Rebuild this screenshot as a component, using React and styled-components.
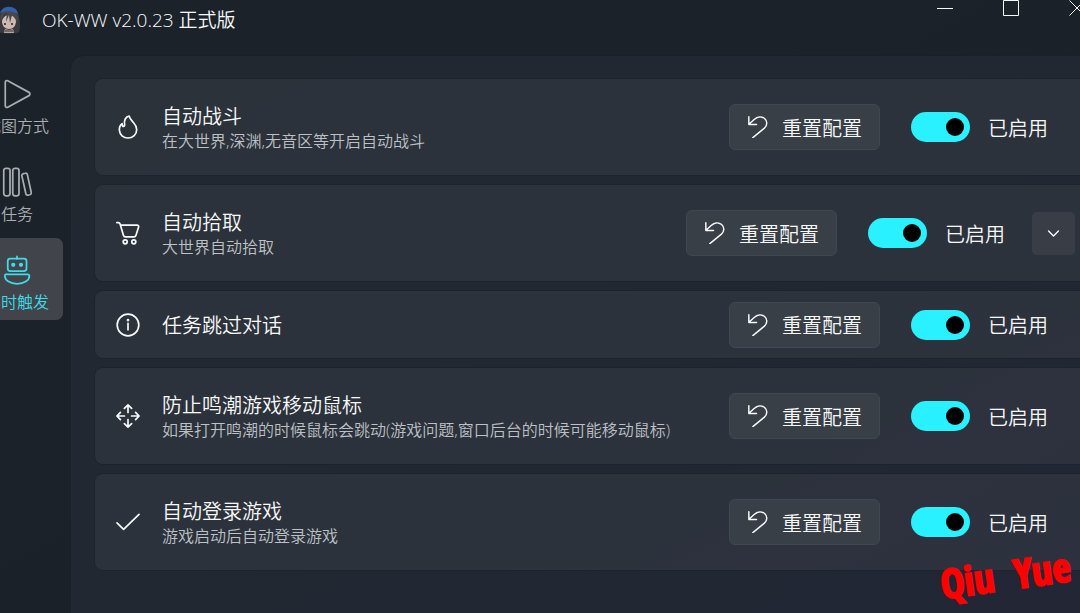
import React, { useState } from 'react'
import styled, { createGlobalStyle } from 'styled-components'

const GlobalStyle = createGlobalStyle`
  * {
    box-sizing: border-box;
  }

  html, body, #root {
    height: 100%;
  }

  body {
    margin: 0;
    overflow: hidden;
    background: #1b2129;
    color: #f8f9fa;
    font-family: "Open Sans", "Noto Sans CJK SC", sans-serif;
    font-weight: 350;
  }

  button {
    margin: 0;
    padding: 0;
    border: none;
    background: none;
    color: inherit;
    font: inherit;
  }
`

const Window = styled.div`
  display: flex;
  flex-direction: column;
  min-height: 100%;
  overflow: hidden;
  background-image: linear-gradient(150deg, #1b2229 0%, #1b2229 40%, #1b1f2b 100%);
`

const TitleBar = styled.header`
  display: flex;
  align-items: flex-start;
  height: 55px;
`

const Avatar = styled.svg`
  width: 26px;
  height: 28px;
  margin: 6px 20px 0 -4px;
`

const AppTitle = styled.h1`
  flex: 1;
  margin: 0;
  padding-top: 6px;
  font-size: 19px;
  line-height: 28px;
  font-weight: 350;
`

const WindowButtons = styled.div`
  display: flex;
  margin-right: -30px;
`

const WindowButton = styled.button`
  display: flex;
  justify-content: center;
  width: 66px;
  height: 32px;
`

const Body = styled.div`
  display: flex;
  flex: 1;
`

const Nav = styled.nav`
  display: flex;
  flex-direction: column;
  flex: none;
  gap: 6px;
  width: 92px;
  margin: 0 7px 0 -29px;
  padding-top: 7px;
`

const NavItem = styled.button`
  display: flex;
  flex-direction: column;
  align-items: center;
  gap: 6px;
  padding: 17px 0 7px;
  border-radius: 7px;
  background: ${({ $active }) => ($active ? '#41454b' : 'transparent')};
  color: ${({ $active }) => ($active ? '#3fdbe6' : '#a9adb1')};
  font-size: 16px;
  line-height: 22px;
`

const Panel = styled.main`
  flex: 1;
  min-width: 0;
  padding: 23px 0 24px 24px;
  border: 1px solid #1a2027;
  border-width: 1px 0 0 1px;
  border-radius: 14px 0 0 0;
  background-image: linear-gradient(150deg, #212830 0%, #212831 45%, #222635 100%);
`

const List = styled.ul`
  display: flex;
  flex-direction: column;
  gap: 10px;
  margin: 0;
  padding: 0;
  list-style: none;
`

const Card = styled.li`
  display: flex;
  align-items: center;
  min-height: ${({ $compact }) => ($compact ? '67px' : '96px')};
  padding: 0 ${({ $expandable }) => ($expandable ? '5px' : '32px')} 0 21px;
  border-radius: 8px 0 0 8px;
  background: rgba(255, 255, 255, 0.05);
  box-shadow: 0 0 0 1px rgba(0, 0, 0, 0.1);
`

const CardText = styled.div`
  flex: 1;
  min-width: 0;
  margin-left: 22px;
  padding-top: 2px;
  white-space: nowrap;
`

const CardTitle = styled.h2`
  margin: 0;
  font-size: 20px;
  line-height: 26px;
  font-weight: 350;
`

const CardNote = styled.p`
  margin: 0;
  color: #bdc0c4;
  font-size: 16px;
  line-height: 22px;
`

const ResetButton = styled.button`
  display: flex;
  align-items: center;
  gap: 13px;
  height: 46px;
  padding: 0 17px;
  border: 1px solid #42474f;
  border-radius: 6px;
  background: #393f47;
`

const ControlText = styled.span`
  padding-top: 3px;
  font-size: 20px;
  line-height: 26px;
`

const SwitchLabel = styled.label`
  display: flex;
  align-items: center;
  gap: 18px;
  margin-left: 31px;
`

const Switch = styled.input`
  display: flex;
  align-items: center;
  justify-content: ${({ checked }) => (checked ? 'flex-end' : 'flex-start')};
  appearance: none;
  width: 59px;
  height: 30px;
  margin: 0;
  padding: 0 6px;
  border-radius: 15px;
  background: ${({ checked }) => (checked ? '#29f1ff' : '#575c63')};

  &::before {
    content: "";
    width: 18px;
    height: 18px;
    border-radius: 50%;
    background: #000;
  }
`

const ExpandButton = styled.button`
  display: flex;
  align-items: center;
  justify-content: center;
  width: 43px;
  height: 43px;
  margin-left: 27px;
  border-radius: 5px;
  background: #393e46;
`

// Floats over the bottom corner of the window
const Signature = styled.div`
  position: absolute;
  right: 9px;
  bottom: 14px;
  display: flex;
  gap: 20px;
  color: #fe0000;
  font-family: "Liberation Sans Narrow", "Open Sans Condensed", "Roboto Condensed", "Liberation Sans", sans-serif;
  font-size: 40px;
  font-weight: 700;
  line-height: 48px;
  -webkit-text-stroke: 2px #fe0000;
  transform: rotate(-8deg);
`

const Icon = ({ size = 24, width = 1.4, children }) => (
  <svg width={size} height={size} viewBox="0 0 24 24" fill="none" stroke="currentColor" strokeWidth={width} strokeLinecap="round" strokeLinejoin="round" aria-hidden="true">
    {children}
  </svg>
)

const icons = {
  play: <path d="M2.6 2.6c0-1.1 1-1.7 2-1.2l17 9.3c1 .6 1 2 0 2.6l-17 9.3c-1 .5-2-.1-2-1.2z" />,
  library: (
    <>
      <rect x="1.4" y="1" width="5" height="22" rx="1.8" />
      <rect x="8.6" y="1" width="5" height="22" rx="1.8" />
      <path d="M17.2 5.3l1.4-.3c.8-.2 1.5.3 1.7 1.1l3.1 14.3c.2.8-.3 1.6-1.1 1.8l-1.4.3c-.8.2-1.6-.3-1.8-1.1L15.9 7.1c-.2-.8.4-1.6 1.3-1.8z" />
    </>
  ),
  robot: (
    <>
      <path d="M12 1v2" />
      <rect x="4.6" y="2.8" width="15" height="10" rx="2" />
      <circle cx="9" cy="7.8" r="1" fill="currentColor" />
      <circle cx="15.2" cy="7.8" r="1" fill="currentColor" />
      <path d="M3.8 15.4h16.6c1 0 1.5.6 1.5 1.4 0 3.6-4.4 6.2-9.8 6.2s-9.8-2.6-9.8-6.2c0-.8.5-1.4 1.5-1.4z" />
    </>
  ),
  fire: <path d="M13.2 1.2c-3.6.6-5.4 4.2-4.6 8.2.2 1.2-.3 2-1.1 2-.9 0-1.3-1-1.4-2.8-2.2 1.8-3 4.1-2.7 6.8.4 4.3 3.8 7.6 8.5 7.6 5 0 8.8-3.6 8.8-8.6 0-2.8-1.4-4.8-3.3-6.9-2-2.2-3.7-3.7-4.2-6.3z" />,
  cart: (
    <>
      <path d="M.8 1.6h1.6c.9 0 1.4.6 1.7 1.5l3.3 11.2c.3 1 1 1.6 2 1.6h8.5c1 0 1.8-.6 2.1-1.6l2.6-8.2c.3-1-.4-1.9-1.4-1.9H4.7" />
      <circle cx="9.2" cy="20.8" r="2" />
      <circle cx="17.8" cy="20.8" r="2" />
    </>
  ),
  info: (
    <>
      <circle cx="12" cy="12" r="10.8" />
      <path d="M12 10.4v6.4" />
      <circle cx="12" cy="7.2" r=".5" fill="currentColor" />
    </>
  ),
  move: (
    <>
      <path d="M12 8.4V1M8.4 4.4L12 .9l3.6 3.5" />
      <path d="M12 15.6V23M8.4 19.6l3.6 3.5 3.6-3.5" />
      <path d="M8.4 12H1M4.4 8.4L.9 12l3.5 3.6" />
      <path d="M15.6 12H23M19.6 8.4l3.5 3.6-3.5 3.6" />
    </>
  ),
  check: <path d="M1 12.8l6.6 6.6L23 4.4" />,
  reset: <path d="M2 .8v8.4h8.4M2.4 8.8l5.4-5C11.4.4 16 0 19.2 2.8c3.2 2.8 3.2 7.2-.2 10.4L6.4 23.6" />,
  chevron: <path d="M5 8.5l7 7 7-7" />,
}

const navItems = [
  { icon: 'play', label: '截图方式' },
  { icon: 'library', label: '任务' },
  { icon: 'robot', label: '实时触发' },
]

const tasks = [
  { icon: 'fire', title: '自动战斗', note: '在大世界,深渊,无音区等开启自动战斗' },
  { icon: 'cart', title: '自动拾取', note: '大世界自动拾取', expandable: true },
  { icon: 'info', title: '任务跳过对话' },
  { icon: 'move', title: '防止鸣潮游戏移动鼠标', note: '如果打开鸣潮的时候鼠标会跳动(游戏问题,窗口后台的时候可能移动鼠标)' },
  { icon: 'check', title: '自动登录游戏', note: '游戏启动后自动登录游戏' },
]

const TaskCard = ({ icon, title, note, expandable }) => {
  const [enabled, setEnabled] = useState(true)

  return (
    <Card $compact={!note} $expandable={expandable}>
      <Icon width={1.7}>{icons[icon]}</Icon>
      <CardText>
        <CardTitle>{title}</CardTitle>
        {note && <CardNote>{note}</CardNote>}
      </CardText>
      <ResetButton type="button">
        <Icon size={22} width={1.6}>{icons.reset}</Icon>
        <ControlText>重置配置</ControlText>
      </ResetButton>
      <SwitchLabel>
        <Switch type="checkbox" role="switch" checked={enabled} onChange={() => setEnabled(!enabled)} />
        <ControlText>{enabled ? '已启用' : '已禁用'}</ControlText>
      </SwitchLabel>
      {expandable && (
        <ExpandButton type="button" aria-label="展开">
          <Icon size={17} width={2}>{icons.chevron}</Icon>
        </ExpandButton>
      )}
    </Card>
  )
}

const App = () => {
  const [page, setPage] = useState('robot')

  return (
    <Window>
      <GlobalStyle />
      <TitleBar>
        <Avatar viewBox="0 0 26 28" aria-hidden="true">
          <path d="M3 11C3 4 8 2 13 2s10 3 10 9c1 5 2 10 0 15-3 2-17 2-20 0-2-5-1-10 0-15z" fill="#393a3e" />
          <path d="M6 15c1-4 4-6 7-6s6 2 7 6c0 5-3 8-7 8s-7-3-7-8z" fill="#cdbab1" />
          <path d="M5 17c0-6 3-10 6-10l-1 9 3-7 1 8 2-8c3 2 5 5 5 9l1-7-3-6H7l-3 6z" fill="#4a4749" />
          <path d="M4 7C6 2 10 0 14 1c4 0 7 2 8 7-5-3-12-4-18-1z" fill="#315fae" />
          <path d="M9 17v2M16 17v2" stroke="#59443f" strokeWidth="2" />
          <path d="M8 27l1-4 4 1 4-1 1 4z" fill="#b6a49d" />
          <path d="M9 25h8" stroke="#333036" strokeWidth="1" />
        </Avatar>
        <AppTitle>OK-WW v2.0.23 正式版</AppTitle>
        <WindowButtons>
          <WindowButton type="button" aria-label="最小化">
            <svg width="16" height="16" stroke="currentColor"><path d="M0 8.5h16" /></svg>
          </WindowButton>
          <WindowButton type="button" aria-label="最大化">
            <svg width="16" height="16" stroke="currentColor" fill="none"><path d="M.5.5h15v15H.5z" /></svg>
          </WindowButton>
          <WindowButton type="button" aria-label="关闭">
            <svg width="16" height="16" stroke="currentColor"><path d="M.5.5l15 15M15.5.5l-15 15" /></svg>
          </WindowButton>
        </WindowButtons>
      </TitleBar>
      <Body>
        <Nav>
          {navItems.map(({ icon, label }) => (
            <NavItem key={icon} type="button" $active={page === icon} onClick={() => setPage(icon)}>
              <Icon size={30}>{icons[icon]}</Icon>
              {label}
            </NavItem>
          ))}
        </Nav>
        <Panel>
          <List>
            {tasks.map((task) => <TaskCard key={task.title} {...task} />)}
          </List>
        </Panel>
      </Body>
      <Signature>
        <span>Qiu</span>
        <span>Yue</span>
      </Signature>
    </Window>
  )
}

export default App
